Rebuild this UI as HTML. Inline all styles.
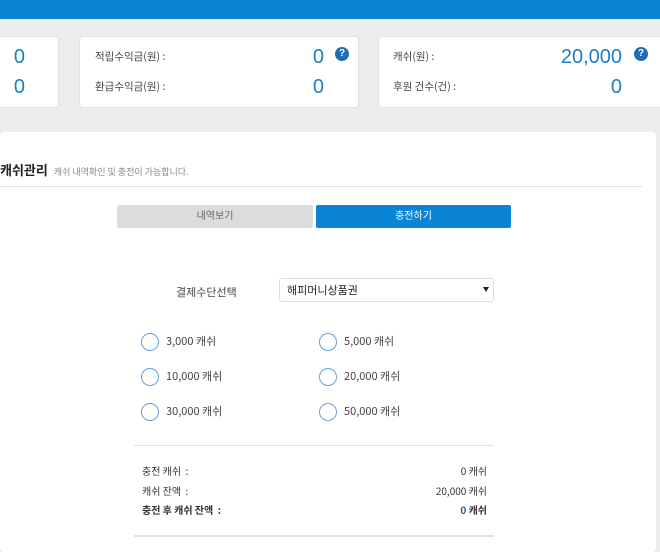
<!DOCTYPE html>
<html><head><meta charset="utf-8"><style>
*{margin:0;padding:0;box-sizing:border-box}
body{width:660px;height:538px;overflow:hidden;background:#ededed;font-family:"Liberation Sans","Noto Sans CJK KR",sans-serif;position:relative;color:#333}
.a{position:absolute}
.top{left:0;top:0;width:660px;height:19px;background:#0a84d4}
.card{background:#fff;border-radius:4px;border:1px solid #e2e2e2}
.lab{font-size:10.5px;color:#444;font-family:"Noto Sans CJK KR",sans-serif}
.num{font-size:20px;color:#1a7fc8;text-align:right}
.q{width:14px;height:14px;border-radius:50%;background:#1f6db5;color:#fff;font-size:10px;font-weight:bold;text-align:center;line-height:14px}
.rad{width:18px;height:18px;border:1.5px solid #6c9fd0;border-radius:50%}
.rt{font-size:11px;color:#444;font-family:"Noto Sans CJK KR",sans-serif}
.s{font-size:10px;color:#333;font-family:"Noto Sans CJK KR",sans-serif}
</style></head><body>
<div class="a top"></div>
<div class="a card" style="left:-6px;top:36px;width:65px;height:72px"></div>
<div class="a num" style="left:0;top:46px;width:25px">0</div>
<div class="a num" style="left:0;top:76px;width:25px">0</div>
<div class="a card" style="left:79px;top:36px;width:280px;height:72px"></div>
<div class="a lab" style="left:95px;top:49px">적립수익금(원) :</div>
<div class="a lab" style="left:95px;top:79px">환급수익금(원) :</div>
<div class="a num" style="left:250px;top:46px;width:74px">0</div>
<div class="a num" style="left:250px;top:76px;width:74px">0</div>
<div class="a q" style="left:335px;top:47px">?</div>
<div class="a card" style="left:378px;top:36px;width:290px;height:72px"></div>
<div class="a lab" style="left:393px;top:49px">캐쉬(원) :</div>
<div class="a lab" style="left:393px;top:79px">후원 건수(건) :</div>
<div class="a num" style="left:500px;top:46px;width:122px">20,000</div>
<div class="a num" style="left:500px;top:76px;width:122px">0</div>
<div class="a q" style="left:634px;top:47px">?</div>
<div class="a" style="left:0;top:132px;width:656px;height:420px;background:#fff;border-radius:4px"></div>
<div class="a" style="left:0;top:160px;font-size:13px;font-weight:bold;color:#222;font-family:'Noto Sans CJK KR',sans-serif">캐쉬관리 <span style="font-size:9px;font-weight:normal;color:#888;margin-left:3px">캐쉬 내역확인 및 충전이 가능합니다.</span></div>
<div class="a" style="left:0;top:186px;width:642px;height:1px;background:#e3e3e3"></div>
<div class="a" style="left:117px;top:205px;width:196px;height:23px;background:#dcdcdc;border-radius:2px;font-size:10px;color:#666;text-align:center;line-height:23px">내역보기</div>
<div class="a" style="left:316px;top:205px;width:195px;height:23px;background:#0a84d4;border-radius:2px;font-size:10px;color:#fff;text-align:center;line-height:23px">충전하기</div>
<div class="a" style="left:176px;top:284px;font-size:11px;color:#444;font-family:'Noto Sans CJK KR',sans-serif">결제수단선택</div>
<div class="a" style="left:279px;top:278px;width:215px;height:24px;border:1px solid #ddd;border-radius:3px;font-size:11px;color:#222;padding:3px 0 0 7px;font-family:'Noto Sans CJK KR',sans-serif">해피머니상품권</div>
<svg class="a" style="left:483px;top:287px" width="6" height="5"><path d="M0 0H6L3 5Z" fill="#222"/></svg>
<div class="a rad" style="left:141px;top:333px"></div><div class="a rt" style="left:166px;top:333px">3,000 캐쉬</div>
<div class="a rad" style="left:319px;top:333px"></div><div class="a rt" style="left:344px;top:333px">5,000 캐쉬</div>
<div class="a rad" style="left:141px;top:368px"></div><div class="a rt" style="left:166px;top:368px">10,000 캐쉬</div>
<div class="a rad" style="left:319px;top:368px"></div><div class="a rt" style="left:344px;top:368px">20,000 캐쉬</div>
<div class="a rad" style="left:141px;top:403px"></div><div class="a rt" style="left:166px;top:403px">30,000 캐쉬</div>
<div class="a rad" style="left:319px;top:403px"></div><div class="a rt" style="left:344px;top:403px">50,000 캐쉬</div>
<div class="a" style="left:134px;top:445px;width:360px;height:1px;background:#e3e3e3"></div>
<div class="a s" style="left:142px;top:463px">충전 캐쉬 &nbsp;:</div>
<div class="a s" style="left:142px;top:483px">캐쉬 잔액 &nbsp;:</div>
<div class="a s" style="left:142px;top:502px;font-weight:bold">충전 후 캐쉬 잔액 &nbsp;:</div>
<div class="a s" style="left:380px;top:463px;width:107px;text-align:right">0 캐쉬</div>
<div class="a s" style="left:380px;top:483px;width:107px;text-align:right">20,000 캐쉬</div>
<div class="a s" style="left:380px;top:502px;width:107px;text-align:right;font-weight:bold"><span style="color:#1a5fb0">0</span> 캐쉬</div>
<div class="a" style="left:134px;top:535px;width:360px;height:2px;background:#e3e3e3"></div>
</body></html>
